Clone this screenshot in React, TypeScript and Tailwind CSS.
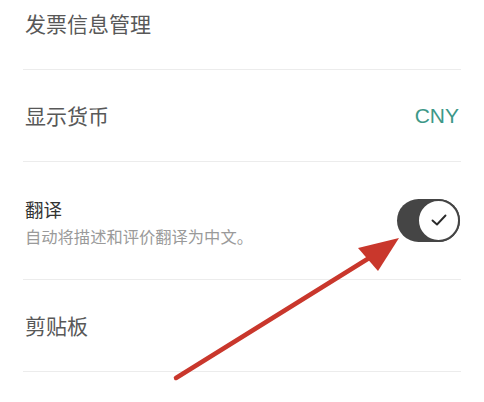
import React from "react";

function Toggle() {
  return (
    <div className="relative w-[63px] h-[43px] rounded-full bg-[#454545]">
      <div className="absolute right-0 top-0 w-[43px] h-[43px] rounded-full bg-white border-2 border-[#454545] flex items-center justify-center">
        <svg width="20" height="16" viewBox="0 0 20 16" fill="none">
          <path d="M3.5 8.5 L8 12.5 L16.5 3.5" stroke="#2a2a2a" strokeWidth="1.9" strokeLinecap="round" strokeLinejoin="round" />
        </svg>
      </div>
    </div>
  );
}

export default function App() {
  return (
    <div
      className="relative w-[484px] h-[402px] bg-white overflow-hidden"
      style={{ fontFamily: '"Noto Sans CJK SC", "Noto Sans", sans-serif' }}
    >
      <div className="px-[23px] -mt-[22px]">
        <div className="h-[92px] flex items-center border-b border-[#ececec]">
          <span className="pl-[2px] text-[21px] text-[#585858]">发票信息管理</span>
        </div>
        <div className="h-[92px] flex items-center justify-between border-b border-[#ececec]">
          <span className="pl-[2px] text-[21px] text-[#585858]">显示货币</span>
          <span className="pr-[2px] text-[21px] text-[#3d9888]" style={{ fontFamily: '"Liberation Sans", Arial, sans-serif' }}>CNY</span>
        </div>
        <div className="h-[118px] flex items-center justify-between border-b border-[#ececec]">
          <div className="pl-[2px] flex flex-col pt-[2px]">
            <span className="text-[18.5px] leading-[28px] text-[#333]">翻译</span>
            <span className="text-[16.3px] leading-[26px] text-[#9a9a9a]">自动将描述和评价翻译为中文。</span>
          </div>
          <div className="pr-[1px] -mt-[1px]">
            <Toggle />
          </div>
        </div>
        <div className="h-[92px] flex items-center border-b border-[#ececec]">
          <span className="pl-[2px] text-[21px] text-[#585858]">剪贴板</span>
        </div>
      </div>

      <svg className="absolute inset-0 pointer-events-none" width="484" height="402" viewBox="0 0 484 402">
        <line x1="176" y1="378" x2="382" y2="250" stroke="#c9372c" strokeWidth="4.5" strokeLinecap="round" />
        <polygon points="399,238 358,248 378,271" fill="#c9372c" />
      </svg>
    </div>
  );
}
